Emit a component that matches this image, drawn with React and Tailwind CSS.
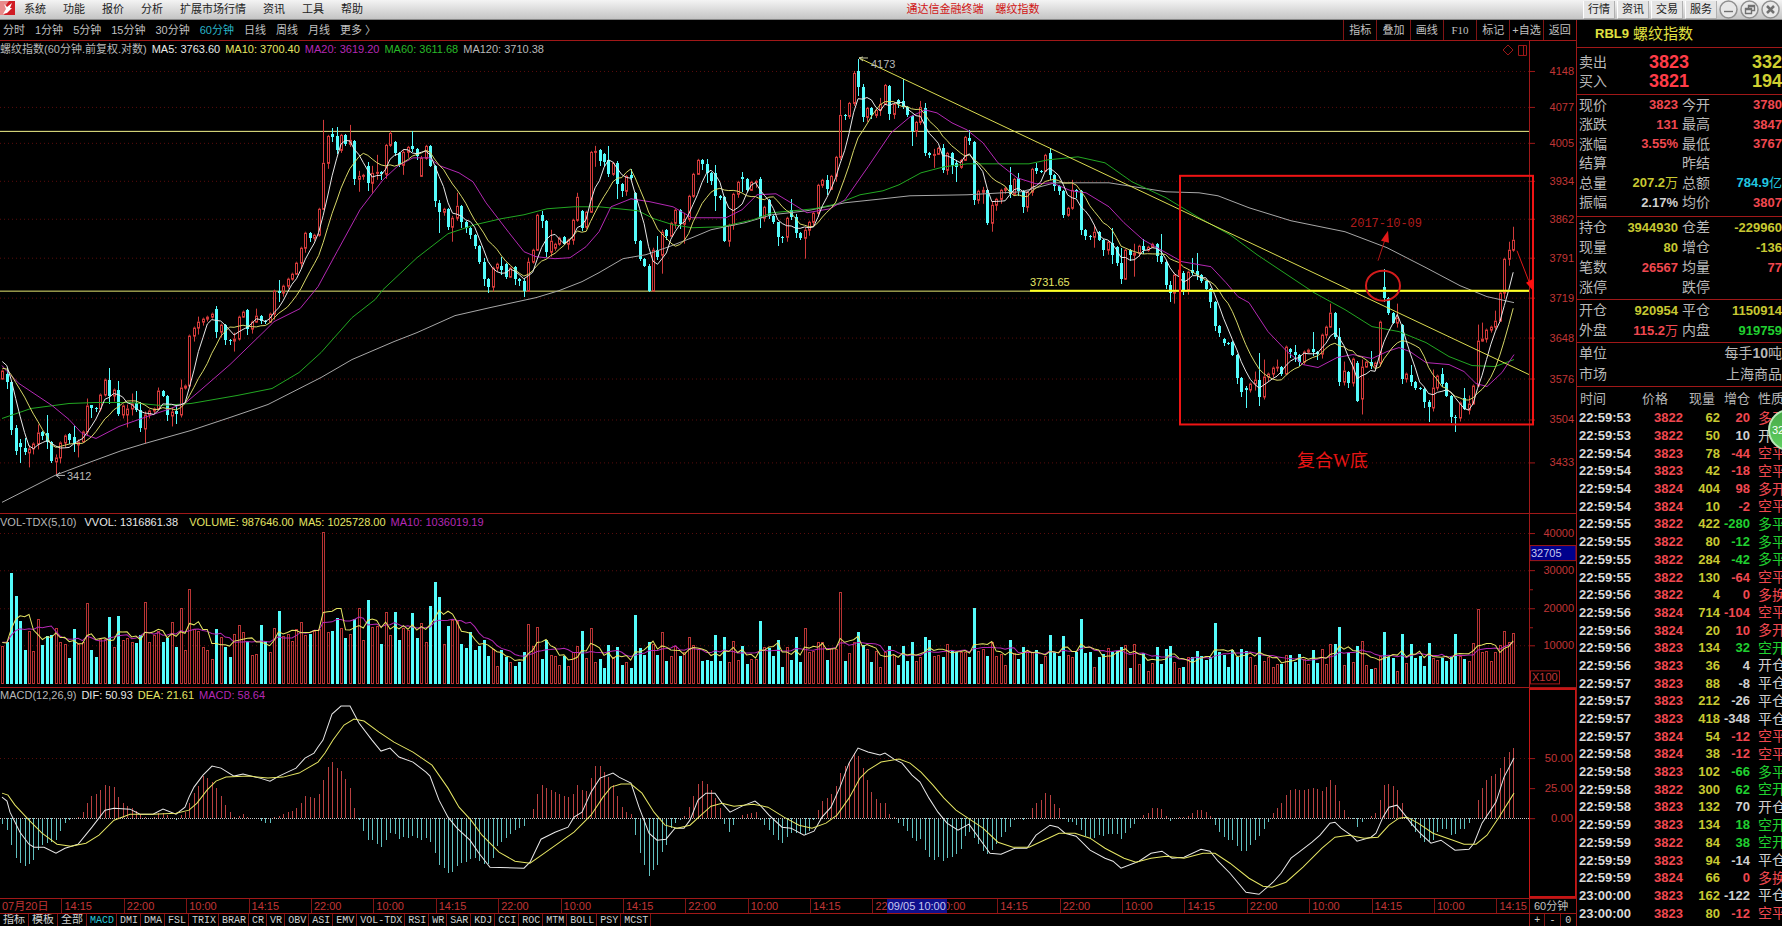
import clsx from "clsx";

const STEP = 4.457;
const X0 = 2.3;
const barX = (i) => Math.round(X0 + i * STEP);

const RED = "#d23a3a";
const CYAN = "#54fcfc";
const WHITE = "#e8e8e8";
const YELLOW = "#e6e664";
const MAGENTA = "#b428b4";
const GREEN = "#22a822";
const GRAY = "#a8a8a8";
const LINE = "#a01818";

// close level of every bar, in chart units
const closes = [
  371, 382, 431, 452, 448, 453, 449, 444, 433, 437, 443, 462, 458, 443, 436, 441, 445, 442, 432, 406,
  409, 409, 395, 380, 396, 390, 415, 406, 409, 404, 411, 429, 415, 411, 409, 391, 396, 416, 412, 415,
  388, 386, 336, 328, 322, 319, 317, 314, 332, 325, 340, 341, 339, 317, 312, 329, 322, 316, 321, 322,
  314, 291, 293, 286, 279, 274, 263, 248, 233, 238, 235, 209, 163, 136, 137, 150, 135, 144, 140, 179,
  176, 175, 183, 173, 172, 174, 145, 133, 153, 165, 152, 147, 149, 156, 158, 146, 166, 201, 212, 209,
  227, 218, 206, 222, 228, 235, 246, 262, 279, 287, 268, 264, 270, 277, 268, 279, 281, 291, 262, 250,
  215, 221, 252, 241, 244, 238, 244, 240, 220, 197, 228, 212, 152, 151, 161, 162, 174, 163, 184, 191,
  176, 178, 241, 259, 266, 291, 250, 257, 232, 236, 223, 210, 224, 219, 196, 174, 160, 164, 173, 181,
  196, 198, 241, 225, 194, 182, 179, 190, 182, 181, 218, 207, 216, 222, 237, 237, 218, 217, 233, 238,
  230, 222, 213, 185, 180, 189, 176, 157, 115, 116, 103, 73, 87, 117, 108, 115, 110, 104, 85, 114,
  104, 104, 107, 115, 131, 122, 107, 153, 155, 154, 148, 170, 153, 165, 167, 160, 137, 141, 200, 191,
  190, 223, 205, 199, 190, 188, 194, 179, 191, 207, 192, 169, 171, 171, 155, 175, 186, 191, 215, 208,
  190, 192, 230, 236, 237, 232, 240, 250, 242, 255, 263, 279, 250, 255, 253, 246, 250, 247, 244, 256,
  262, 285, 293, 275, 270, 290, 272, 273, 275, 281, 289, 302, 326, 333, 343, 343, 355, 378, 392, 390,
  384, 380, 397, 377, 374, 368, 367, 374, 347, 352, 355, 362, 352, 350, 352, 354, 335, 327, 313, 337,
  382, 371, 383, 359, 401, 367, 362, 366, 363, 322, 298, 313, 323, 318, 379, 374, 382, 388, 389, 403,
  408, 388, 376, 384, 396, 418, 418, 403, 410, 404, 386, 341, 339, 330, 327, 321, 293, 259, 250, 240,
];

// bars that open away from the previous close
const gapOpens = {
  0: 379, 1: 374, 3: 429, 4: 444, 5: 449, 9: 433, 10: 434, 15: 435, 16: 438, 20: 406, 24: 380, 28: 415,
  48: 309, 55: 310, 62: 291, 69: 233, 74: 134, 75: 136, 79: 141, 82: 166, 85: 172, 88: 142, 92: 146, 94: 176,
  98: 203, 112: 266, 113: 264, 115: 267, 124: 248, 126: 237, 130: 211, 131: 227, 134: 150, 135: 154, 136: 160,
  141: 175, 142: 193, 147: 250, 148: 255, 149: 230, 157: 160, 160: 173, 162: 197, 166: 177, 170: 179, 172: 200,
  177: 210, 192: 71, 193: 87, 199: 86, 201: 100, 202: 101, 204: 116, 207: 108, 214: 163, 217: 138, 218: 142,
  220: 192, 226: 185, 228: 178, 232: 168, 235: 153, 242: 191, 246: 232, 249: 243, 250: 247, 265: 273,
  267: 270, 268: 271, 274: 339, 276: 342, 279: 388, 282: 380, 287: 367, 289: 349, 294: 349, 302: 372, 304: 363,
  305: 399, 310: 287, 314: 325, 316: 375, 323: 374, 324: 383, 325: 396, 328: 398,
};
const openOf = (i) => gapOpens[i] ?? closes[i - 1];
const isUp = (i) => closes[i] < openOf(i);

// bars whose wick reaches well beyond the body: [high, low]
const wicks = {
  1: [368, 389], 3: [426, 456], 4: [440, 464], 5: [439, 456], 6: [446, 468], 8: [425, 450], 10: [416, 450],
  12: [455, 475], 16: [427, 453], 17: [440, 458], 19: [399, 436], 20: [406, 419], 24: [368, 405], 26: [381, 417],
  28: [405, 428], 29: [394, 416], 30: [391, 413], 31: [403, 433], 32: [412, 444], 35: [388, 411], 38: [408, 427],
  39: [406, 425], 40: [380, 418], 44: [317, 335], 48: [306, 338], 52: [333, 352], 57: [309, 323], 62: [280, 302],
  72: [120, 210], 74: [128, 142], 75: [127, 154], 78: [125, 147], 80: [171, 192], 82: [162, 191], 83: [166, 193],
  84: [155, 180], 87: [131, 147], 90: [150, 175], 92: [131, 152], 94: [156, 177], 98: [200, 233], 101: [216, 242],
  102: [193, 221], 108: [258, 286], 112: [257, 275], 117: [279, 297], 118: [258, 292], 121: [211, 228],
  123: [230, 257], 129: [193, 222], 133: [146, 167], 136: [146, 177], 138: [161, 199], 141: [169, 180],
  145: [264, 292], 146: [248, 291], 147: [236, 260], 148: [230, 274], 149: [229, 240], 153: [213, 244],
  158: [159, 183], 160: [165, 211], 166: [172, 192], 170: [177, 228], 174: [222, 246], 177: [199, 220],
  178: [214, 238], 180: [228, 259], 185: [175, 195], 188: [100, 160], 191: [71, 106], 192: [59, 96],
  193: [84, 122], 197: [98, 116], 202: [79, 109], 204: [115, 146], 206: [101, 125], 207: [103, 156],
  209: [149, 168], 211: [144, 173], 213: [152, 174], 214: [160, 182], 217: [130, 145], 220: [187, 204],
  222: [202, 232], 226: [167, 198], 228: [173, 196], 232: [163, 174], 235: [148, 180], 240: [180, 210],
  245: [225, 248], 249: [228, 264], 251: [248, 284], 254: [244, 277], 256: [239, 254], 260: [234, 264],
  262: [281, 302], 263: [273, 304], 265: [271, 295], 267: [258, 275], 268: [253, 280], 279: [386, 409],
  281: [372, 391], 282: [353, 407], 283: [360, 400], 286: [360, 372], 290: [345, 362], 294: [332, 356],
  298: [304, 328], 300: [328, 386], 301: [362, 386], 304: [361, 403], 305: [360, 415], 307: [351, 369],
  310: [269, 302], 313: [304, 328], 316: [365, 386], 320: [400, 423], 321: [370, 412], 323: [368, 387],
  326: [416, 433], 328: [388, 411], 329: [396, 415], 331: [325, 387], 332: [323, 342], 335: [311, 330],
  338: [242, 266], 339: [227, 252],
};

const volumes = [
  38, 42, 111, 88, 63, 34, 53, 33, 65, 39, 48, 49, 56, 42, 40, 26, 55, 40, 42, 81,
  34, 27, 45, 45, 67, 37, 68, 44, 46, 42, 41, 49, 82, 42, 49, 53, 42, 46, 62, 37,
  76, 34, 95, 55, 53, 37, 34, 25, 55, 47, 37, 27, 50, 59, 52, 42, 29, 30, 59, 43,
  32, 56, 73, 48, 50, 43, 55, 62, 49, 50, 53, 55, 152, 52, 53, 66, 56, 46, 50, 65,
  76, 44, 84, 57, 58, 40, 72, 49, 72, 44, 56, 54, 71, 46, 61, 42, 78, 102, 87, 40,
  58, 64, 63, 40, 36, 52, 34, 38, 44, 28, 35, 18, 34, 27, 22, 18, 22, 32, 60, 38,
  57, 25, 44, 29, 28, 19, 28, 18, 32, 38, 53, 26, 56, 22, 25, 16, 39, 27, 37, 19,
  22, 16, 69, 36, 29, 42, 40, 29, 52, 23, 28, 38, 28, 32, 47, 39, 35, 23, 24, 23,
  49, 23, 47, 22, 43, 24, 38, 20, 25, 25, 63, 37, 36, 28, 44, 17, 37, 24, 47, 22,
  56, 32, 33, 42, 42, 24, 36, 35, 92, 23, 31, 42, 52, 39, 35, 22, 33, 17, 32, 38,
  29, 19, 38, 23, 42, 23, 27, 47, 44, 28, 29, 27, 40, 33, 32, 32, 32, 27, 76, 33,
  35, 28, 42, 28, 30, 19, 44, 31, 25, 37, 33, 32, 34, 20, 28, 49, 32, 28, 48, 29,
  27, 32, 65, 31, 32, 17, 27, 30, 36, 32, 33, 37, 39, 16, 40, 20, 31, 13, 21, 37,
  20, 35, 38, 22, 16, 17, 27, 27, 33, 28, 24, 27, 61, 32, 29, 17, 34, 27, 35, 33,
  27, 19, 47, 23, 27, 17, 20, 20, 29, 29, 22, 30, 25, 20, 34, 21, 35, 20, 40, 40,
  57, 19, 31, 22, 38, 43, 19, 15, 16, 28, 52, 27, 26, 13, 50, 21, 40, 26, 28, 18,
  41, 26, 24, 26, 23, 27, 50, 28, 25, 23, 41, 75, 32, 33, 23, 32, 39, 53, 42, 51,
];

const histogram = [
  -6, -12, -27, -40, -45, -48, -46, -42, -32, -27, -25, -24, -22, -13, -5, -2, 0, 1, 6, 15,
  22, 24, 28, 33, 32, 31, 21, 15, 12, 10, 7, 4, 1, 0, 1, 5, 5, 3, 0, -2,
  3, 6, 15, 25, 32, 42, 40, 36, 30, 22, 13, 6, 1, 2, 4, 1, 0, -1, -3, -5,
  -5, 1, 2, 4, 6, 7, 10, 15, 22, 21, 20, 24, 38, 51, 56, 50, 47, 39, 30, 10,
  -2, -13, -22, -22, -26, -29, -22, -15, -16, -21, -19, -20, -18, -20, -22, -20, -24, -35, -47, -50,
  -55, -54, -48, -45, -44, -41, -40, -43, -46, -46, -40, -28, -24, -20, -16, -12, -10, -8, 0, 9,
  24, 33, 30, 28, 26, 24, 22, 21, 24, 33, 28, 27, 40, 52, 52, 46, 41, 33, 22, 11,
  6, 4, -17, -35, -47, -58, -52, -47, -34, -27, -10, -5, -2, 2, 11, 22, 34, 37, 34, 28,
  20, 10, -6, -14, -7, 0, 3, 4, 5, 6, -2, -7, -12, -17, -22, -25, -19, -15, -15, -16,
  -17, -13, -2, 8, 17, 20, 24, 32, 45, 52, 56, 65, 62, 50, 38, 26, 19, 15, 15, 4,
  1, -5, -8, -13, -20, -23, -21, -32, -39, -42, -39, -43, -40, -39, -36, -31, -18, -14, -20, -26,
  -33, -36, -32, -26, -19, -14, -9, -2, -1, -2, 0, 10, 15, 18, 25, 23, 14, 10, -1, -4,
  -4, -7, -12, -18, -20, -20, -17, -18, -16, -16, -16, -21, -15, -10, -6, 0, 3, 5, 10, 10,
  9, 2, -3, -1, 1, 1, 2, 5, 8, 8, 6, 2, -7, -14, -19, -22, -22, -28, -33, -33,
  -27, -22, -18, -11, -4, 5, 10, 15, 23, 28, 29, 28, 28, 29, 30, 29, 27, 31, 38, 33,
  17, 8, 1, -1, -9, -4, 0, 2, 5, 18, 33, 34, 32, 28, 15, 1, -8, -14, -20, -24,
  -23, -22, -14, -11, -11, -17, -16, -11, -11, -5, 0, 18, 30, 38, 42, 44, 50, 61, 66, 70,
];

const ma20 =
  "2,366 7,372 19,384 52,406 69,420 82,434 96,439 119,427 153,415 168,410 186,403 199,392 230,365 264,332 274,322 300,309 318,287 337,252 360,210 383,180 398,166 413,158 429,158 440,166 459,173 473,182 486,203 509,233 524,252 536,257 555,259 570,258 586,247 599,232 611,207 631,199 650,202 673,207 692,218 726,218 742,210 757,195 776,194 791,203 807,213 830,209 845,200 868,167 891,133 910,117 925,110 937,113 952,123 967,130 983,143 998,163 1017,178 1036,184 1052,183 1071,191 1086,193 1109,207 1124,223 1143,240 1166,253 1182,262 1211,267 1226,283 1238,297 1249,303 1268,332 1287,352 1303,365 1318,368 1337,358 1353,355 1372,359 1387,352 1399,348 1410,352 1426,363 1449,365 1464,372 1476,384 1487,387 1502,373 1514,355";
const ma60 =
  "2,419 31,409 69,404 96,403 130,403 161,406 191,404 237,396 272,389 299,373 321,353 352,318 375,300 383,290 417,258 448,234 475,225 501,219 524,215 547,209 574,207 599,207 638,211 654,219 673,225 692,228 722,227 753,220 772,213 814,209 837,204 860,195 883,191 899,185 921,173 944,167 967,164 1029,164 1048,160 1078,157 1105,163 1132,182 1166,198 1199,218 1230,235 1257,255 1284,273 1314,293 1345,310 1372,327 1399,332 1426,343 1449,357 1472,366 1495,367 1514,360";
const ma120 =
  "2,503 55,476 92,462 122,451 145,444 191,431 230,418 268,405 321,378 352,360 394,342 417,333 455,316 490,308 513,303 536,298 559,291 582,282 599,273 623,259 646,255 669,247 692,238 711,230 745,223 772,215 807,211 845,203 883,199 910,196 967,195 1021,192 1055,183 1109,183 1166,192 1199,193 1218,196 1249,208 1291,221 1345,232 1387,248 1426,268 1460,286 1487,297 1514,303";
const dif =
  "2,797 7,801 10,812 20,832 29,844 34,847 44,847 56,853 65,848 78,844 92,827 105,810 114,808 130,809 140,814 153,814 163,809 176,814 185,807 189,797 194,787 203,775 212,766 221,768 234,776 243,774 260,778 270,781 279,776 296,768 305,758 314,753 318,747 323,740 332,714 341,706 350,706 359,723 372,740 381,751 390,748 399,757 413,762 426,772 430,776 439,800 448,817 457,828 470,840 479,853 490,867 524,868 530,862 541,839 555,832 568,827 574,817 582,812 591,792 600,778 613,773 619,777 631,783 639,807 649,833 657,840 666,839 675,828 684,828 690,820 698,800 706,793 715,793 722,803 730,812 742,806 755,801 760,805 769,815 782,827 791,828 804,835 814,831 822,817 831,807 840,787 849,763 858,748 868,752 880,755 885,753 894,759 902,763 912,775 920,782 929,798 938,812 947,823 958,830 969,824 977,835 990,853 1001,854 1015,848 1027,848 1036,835 1050,825 1058,827 1065,833 1076,836 1090,850 1105,858 1113,861 1121,868 1139,861 1151,853 1162,851 1172,858 1184,857 1201,849 1210,851 1218,861 1230,873 1246,892 1259,894 1273,882 1281,873 1291,858 1299,852 1312,842 1320,835 1330,823 1335,822 1341,828 1351,835 1357,841 1371,837 1376,833 1383,817 1389,807 1397,805 1405,815 1411,823 1420,833 1431,843 1441,840 1455,850 1469,849 1474,843 1482,823 1496,802 1504,777 1514,758";
const dea =
  "2,793 8,795 15,805 29,820 42,833 57,844 71,846 86,843 99,835 114,820 130,814 153,814 176,813 189,810 197,803 207,790 216,781 226,777 249,776 268,778 283,777 299,773 318,762 325,753 333,740 344,725 354,719 364,721 379,732 394,742 413,752 432,765 448,788 459,807 471,820 482,835 499,852 515,861 530,863 543,854 574,832 591,815 603,797 611,787 621,784 631,784 642,793 654,812 665,825 677,828 690,825 701,815 711,806 722,803 734,806 753,804 768,807 784,817 799,825 812,828 826,823 837,815 849,798 860,778 868,770 881,762 899,759 910,763 921,772 933,785 944,798 956,810 971,820 983,828 998,842 1013,847 1029,847 1044,840 1059,833 1075,833 1090,838 1105,848 1124,858 1136,862 1151,858 1166,856 1184,858 1203,853 1215,853 1230,863 1249,878 1263,886 1272,887 1286,882 1303,867 1322,848 1335,837 1349,835 1364,838 1378,837 1389,825 1399,818 1407,817 1418,823 1433,833 1453,840 1464,844 1476,844 1487,835 1499,817 1514,793";

const priceTicks = [
  [71, "4148"], [107, "4077"], [143, "4005"], [181, "3934"], [219, "3862"], [258, "3791"],
  [298, "3719"], [338, "3648"], [379, "3576"], [420, "3504"], [463, "3433"],
];
const volumeTicks = [[534, "40000"], [571, "30000"], [609, "20000"], [646, "10000"]];
const macdTicks = [[758, "50.00"], [788, "25.00"], [818, "0.00"]];

const closeHistory = [374, 374, 375, 376, 378, 362, 360, 358, 359];
const volumeHistory = [42, 42, 40, 45, 42, 44, 42, 40, 45];

// moving average as polyline points
function average(values, history, size, map = (v) => v) {
  const all = [...history, ...values];
  return values
    .map((_, i) => {
      const end = i + history.length + 1;
      const mean = all.slice(end - size, end).reduce((a, b) => a + b, 0) / size;
      return `${(X0 + i * STEP).toFixed(1)},${map(mean).toFixed(1)}`;
    })
    .join(" ");
}

function Curve({ points, color }) {
  return <polyline points={points} fill="none" stroke={color} />;
}

function GridLines({ ys }) {
  return ys.map((y) => (
    <line key={y} x1="0" x2="1529" y1={y + 0.5} y2={y + 0.5} stroke="#5a0c0c" strokeDasharray="1 3" />
  ));
}

function Candles() {
  return (
    <g shapeRendering="crispEdges">
      {closes.map((close, i) => {
        const open = openOf(i);
        const top = Math.min(open, close);
        const bottom = Math.max(open, close);
        const [high, low] = wicks[i] || [top - ((i * 7) % 7) - 1, bottom + ((i * 5) % 6) + 1];
        const x = barX(i);
        const h = Math.max(bottom - top, 1);
        return isUp(i) ? (
          <g key={i} stroke={RED} fill="none">
            <line x1={x + 0.5} x2={x + 0.5} y1={Math.min(high, top)} y2={top} />
            <line x1={x + 0.5} x2={x + 0.5} y1={bottom} y2={Math.max(low, bottom)} />
            <rect x={x - 0.5} y={top + 0.5} width="2" height={h} />
          </g>
        ) : (
          <g key={i} fill={CYAN}>
            <rect x={x} y={high} width="1" height={Math.max(low - high, 1)} />
            <rect x={x - 1} y={top} width="3" height={h} />
          </g>
        );
      })}
    </g>
  );
}

function PriceChart() {
  return (
    <svg viewBox="0 41 1529 473" preserveAspectRatio="none" className="block h-full w-full overflow-visible">
      <GridLines ys={priceTicks.map((t) => t[0])} />
      <path d="M0 131.5H1529" stroke="#f4f48c" />
      <path d="M0 291.5H1529" stroke="#e6e670" />
      <Candles />
      <Curve points={ma120} color={GRAY} />
      <Curve points={ma60} color={GREEN} />
      <Curve points={ma20} color={MAGENTA} />
      <Curve points={average(closes, closeHistory, 10)} color="#d8d868" />
      <Curve points={average(closes, closeHistory, 5)} color={WHITE} />
      <path d="M859 58L1529 375" stroke="#dcdc50" />
      <path d="M1030 291H1529" stroke="#ffff20" strokeWidth="2" />
      <g fontSize="11">
        <text x="1030" y="286" fill={YELLOW}>3731.65</text>
        <path d="M859 58h9M859 58l4 3M859 58l4 -1" stroke="#c8c8a0" fill="none" />
        <text x="871" y="68" fill="#b8b8b8">4173</text>
        <path d="M56 476h9M60 473l-4 3l4 3" stroke="#b8b8b8" fill="none" />
        <text x="67" y="481" fill="#b8b8b8">3412</text>
      </g>
      <rect x="1180" y="176" width="353" height="249" fill="none" stroke="#f01414" strokeWidth="2" />
      <ellipse cx="1383" cy="286" rx="17" ry="15" fill="none" stroke="#d41c1c" strokeWidth="2" />
      <path d="M1378 261L1385 240" stroke="#b81818" />
      <path d="M1388 231L1389 243L1381 241Z" fill="#e01818" />
      <path d="M1517 251L1529 282" stroke="#e01818" />
      <path d="M1533 291L1526 283L1533 279Z" fill="#ff1010" />
      <text x="1350" y="227" fontSize="12" fill="#b01c1c" className="font-['Liberation_Mono',monospace]">
        2017-10-09
      </text>
      <text x="1297" y="468" fontSize="18" fill="#e81414" className="font-['Liberation_Serif','Noto_Sans_CJK_SC',serif]">
        复合W底
      </text>
      <path d="M1508 45l5 5l-5 5l-5 -5zM1518.5 45.5h8v10h-8zM1523.5 45.5v10" fill="none" stroke={LINE} />
    </svg>
  );
}

function VolumeChart() {
  const map = (v) => 685 - v;
  return (
    <svg viewBox="0 515 1529 172" preserveAspectRatio="none" className="block h-full w-full">
      <GridLines ys={volumeTicks.map((t) => t[0])} />
      <g shapeRendering="crispEdges">
        {volumes.map((v, i) =>
          isUp(i) ? (
            <rect key={i} x={barX(i) - 0.5} y={685.5 - v} width="2" height={v - 1} fill="none" stroke="#b83434" />
          ) : (
            <rect key={i} x={barX(i) - 1} y={685 - v} width="3" height={v} fill={CYAN} />
          )
        )}
      </g>
      <Curve points={average(volumes, volumeHistory, 10, map)} color={MAGENTA} />
      <Curve points={average(volumes, volumeHistory, 5, map)} color={YELLOW} />
    </svg>
  );
}

function MacdChart() {
  return (
    <svg viewBox="0 688 1529 210" preserveAspectRatio="none" className="block h-full w-full">
      <GridLines ys={[758]} />
      <g shapeRendering="crispEdges">
        {histogram.map((v, i) => (
          <rect
            key={i}
            x={barX(i)}
            y={v > 0 ? 818 - v : 818}
            width="1"
            height={Math.abs(v)}
            fill={v > 0 ? "#b84040" : "#60c0c0"}
          />
        ))}
        <path d="M0 818.5H1529" stroke="#c8c8c8" strokeDasharray="1 1" />
      </g>
      <Curve points={dif} color={WHITE} />
      <Curve points={dea} color={YELLOW} />
    </svg>
  );
}

function Axis({ viewBox, ticks, labelX = 44, children }) {
  return (
    <svg viewBox={viewBox} preserveAspectRatio="none" className="block h-full w-full">
      {ticks.map(([y, label]) => (
        <g key={label}>
          <path d={`M0 ${y + 0.5}h5`} stroke={LINE} />
          <text x={labelX} y={y + 4} textAnchor="end" fontSize="11" fill="#c03636">
            {label}
          </text>
        </g>
      ))}
      {children}
    </svg>
  );
}

function Legend({ items }) {
  return (
    <div className="absolute top-px left-0 flex h-3.5 items-center gap-[5px] text-[11px] leading-none whitespace-pre">
      {items.map(([text, color]) => (
        <span key={text} className={color}>
          {text}
        </span>
      ))}
    </div>
  );
}

function Panel({ className, chart, axis, legend, axisClass }) {
  return (
    <section className={clsx("flex min-h-0 border-b border-[#a01818]", className)}>
      <div className="relative min-w-0 flex-1">
        {chart}
        <Legend items={legend} />
      </div>
      <div className={clsx("w-[47px] shrink-0 border-l", axisClass || "border-[#a01818]")}>{axis}</div>
    </section>
  );
}

const menus = ["系统", "功能", "报价", "分析", "扩展市场行情", "资讯", "工具", "帮助"];
const shortcuts = ["行情", "资讯", "交易", "服务"];
const windowIcons = [
  ["最小化", "M5 11.5h9"],
  ["还原", "M8.5 8v-2.5h6v5h-3M5.5 8.5h6v5h-6zM8 6.5h6.5M5 9.5h6.5"],
  ["关闭", "M6 6l7 7M13 6l-7 7"],
];

function TitleBar() {
  return (
    <header className="flex h-5 shrink-0 items-center border-b border-[#888] bg-gradient-to-b from-[#f4f4f4] to-[#c4c4c4] text-[11px] leading-none text-[#222]">
      <svg viewBox="0 0 16 16" className="mb-1 h-4 w-4">
        <rect x="0" y="1" width="15" height="14" fill="#d01c24" />
        <path d="M0 1h9l-3 4l1 4l-3 6h-4z" fill="#e88a8a" />
        <path d="M3 14l3-5l-2-5l3 3l5-4l-2 5l2 0l-5 5z" fill="#fff" />
      </svg>
      <nav className="ml-2 flex gap-[17px]">
        {menus.map((m) => (
          <button key={m}>{m}</button>
        ))}
      </nav>
      <h1 className="flex flex-1 justify-center gap-3 text-[#d01414]">
        <span>通达信金融终端</span>
        <span>螺纹指数</span>
      </h1>
      <div className="flex gap-0.5">
        {shortcuts.map((s) => (
          <button key={s} className="h-[18px] w-8 border border-t-0 border-[#b0b0b0] border-l-white bg-[#e4e4e4]">
            {s}
          </button>
        ))}
      </div>
      <div className="mx-0.5 flex gap-0.5">
        {windowIcons.map(([label, d]) => (
          <button key={label} aria-label={label}>
            <svg viewBox="0 0 19 19" className="h-[19px] w-[19px]" fill="none" stroke="#707070">
              <circle cx="9.5" cy="9.5" r="8.5" fill="#e8e8e8" stroke="#909090" strokeWidth="1.5" />
              <path d={d} strokeWidth={label === "关闭" ? 2.5 : 1.4} />
            </svg>
          </button>
        ))}
      </div>
    </header>
  );
}

const periods = ["分时", "1分钟", "5分钟", "15分钟", "30分钟", "60分钟", "日线", "周线", "月线", "更多 〉"];
const tools = ["指标", "叠加", "画线", "F10", "标记", "+自选", "返回"];

function Toolbar() {
  return (
    <div className="flex h-[21px] shrink-0 items-stretch justify-between border-b border-[#a01818] text-[11px] leading-none text-[#c0c0c0]">
      <div className="flex items-center gap-2.5 pl-[3px]">
        {periods.map((p) => (
          <button key={p} className={p === "60分钟" ? "text-[#28b4c8]" : ""}>
            {p}
          </button>
        ))}
      </div>
      <div className="grid w-[233px] grid-cols-7">
        {tools.map((t) => (
          <button
            key={t}
            className={clsx("border-l border-[#801414] whitespace-nowrap", t === "F10" && "font-['Liberation_Serif',serif]")}
          >
            {t}
          </button>
        ))}
      </div>
    </div>
  );
}

const times = ["07月20日"];
for (let i = 0; i < 22; i++) times.push(["14:15", "22:00", "10:00"][i % 3]);
times.push("10:00");

function TimeAxis() {
  return (
    <div className="flex h-[15px] shrink-0 border-b border-[#a01818] text-[11px] leading-[15px] text-[#c03636]">
      <div className="relative flex min-w-0 flex-1">
        {times.map((t, i) => (
          <span key={i} className={clsx("min-w-0 flex-[62] pl-0.5", i > 0 && "border-l border-[#801414]")}>
            {t}
          </span>
        ))}
        <span className="min-w-0 flex-[31] border-l border-[#801414] pl-0.5">14:15</span>
        <span className="absolute top-0 left-[58%] h-full w-[60px] bg-[#10108c] text-center whitespace-nowrap text-[#c8c8f0]">
          09/05 10:00
        </span>
      </div>
      <div className="w-[47px] shrink-0 border-l border-[#a01818] pl-1 text-[#c0c0c0]">60分钟</div>
    </div>
  );
}

const indicators =
  "指标 模板 全部 MACD DMI DMA FSL TRIX BRAR CR VR OBV ASI EMV VOL-TDX RSI WR SAR KDJ CCI ROC MTM BOLL PSY MCST".split(" ");

function IndicatorTabs() {
  return (
    <div className="flex h-3 shrink-0 justify-between overflow-hidden font-['Liberation_Mono','Noto_Sans_CJK_SC',monospace] text-[10px] leading-[13px] text-[#d0d0d0]">
      <div className="flex">
        {indicators.map((t, i) => (
          <button
            key={t}
            className={clsx(
              "border-r border-[#801414] pl-[3px]",
              i < 3 ? "pr-[3px] text-[11px]" : "pr-0.5",
              t === "MACD" && "text-[#28c8d8]"
            )}
          >
            {t}
          </button>
        ))}
      </div>
      <div className="grid w-[47px] grid-cols-3 border-l border-[#a01818]">
        {["+", "-", "0"].map((t) => (
          <button key={t} className="border-r border-[#801414] last:border-r-0">
            {t}
          </button>
        ))}
      </div>
    </div>
  );
}

const R = "text-[#f04850]";
const Y = "text-[#c8c832]";
const G = "text-[#20d030]";
const W = "text-[#d0d0d0]";
const C = "text-[#20c8e0]";

const quoteGroups = [
  {
    size: "h-[122px] pb-1",
    rows: [
      ["现价", "3823", R, "今开", "3780", R],
      ["涨跌", "131", R, "最高", "3847", R],
      ["涨幅", "3.55%", R, "最低", "3767", R],
      ["结算", "", R, "昨结", "", R],
      ["总量", "207.2万", Y, "总额", "784.9亿", C],
      ["振幅", "2.17%", W, "均价", "3807", R],
    ],
  },
  {
    size: "h-[83px] pb-0.5",
    rows: [
      ["持仓", "3944930", Y, "仓差", "-229960", Y],
      ["现量", "80", Y, "增仓", "-136", Y],
      ["笔数", "26567", R, "均量", "77", R],
      ["涨停", "", R, "跌停", "", R],
    ],
  },
  {
    size: "h-[43px] pb-0.5",
    rows: [
      ["开仓", "920954", Y, "平仓", "1150914", Y],
      ["外盘", "115.2万", R, "内盘", "919759", G],
    ],
  },
];

const trades = [
  ["22:59:53", 3822, 62, 20, "多开", R],
  ["22:59:53", 3822, 50, 10, "开仓", W],
  ["22:59:54", 3823, 78, -44, "空平", R],
  ["22:59:54", 3823, 42, -18, "空平", R],
  ["22:59:54", 3824, 404, 98, "多开", R],
  ["22:59:54", 3824, 10, -2, "空平", R],
  ["22:59:55", 3822, 422, -280, "多平", G],
  ["22:59:55", 3822, 80, -12, "多平", G],
  ["22:59:55", 3822, 284, -42, "多平", G],
  ["22:59:55", 3822, 130, -64, "空平", R],
  ["22:59:56", 3822, 4, 0, "多换", R],
  ["22:59:56", 3824, 714, -104, "空平", R],
  ["22:59:56", 3824, 20, 10, "多开", R],
  ["22:59:56", 3823, 134, 32, "空开", G],
  ["22:59:56", 3823, 36, 4, "开仓", W],
  ["22:59:57", 3823, 88, -8, "平仓", W],
  ["22:59:57", 3823, 212, -26, "平仓", W],
  ["22:59:57", 3823, 418, -348, "平仓", W],
  ["22:59:57", 3824, 54, -12, "空平", R],
  ["22:59:58", 3824, 38, -12, "空平", R],
  ["22:59:58", 3823, 102, -66, "多平", G],
  ["22:59:58", 3822, 300, 62, "空开", G],
  ["22:59:58", 3823, 132, 70, "开仓", W],
  ["22:59:59", 3823, 134, 18, "空开", G],
  ["22:59:59", 3822, 84, 38, "空开", G],
  ["22:59:59", 3823, 94, -14, "平仓", W],
  ["22:59:59", 3824, 66, 0, "多换", R],
  ["23:00:00", 3823, 162, -122, "平仓", W],
  ["23:00:00", 3823, 80, -12, "空平", R],
];

// the unit after a number is set in the regular weight
function Amount({ text }) {
  const unit = /[万亿]$/.test(text) ? text.slice(-1) : "";
  return (
    <>
      {unit ? text.slice(0, -1) : text}
      {unit && <span className="font-normal">{unit}</span>}
    </>
  );
}

function QuoteGroup({ rows, size }) {
  return (
    <dl className={clsx("grid shrink-0 auto-rows-fr border-b border-[#a01818] pl-0.5", size)}>
      {rows.map(([a, av, ac, b, bv, bc]) => (
        <div key={a} className="grid grid-cols-[30px_69px_35px_1fr] items-center text-[14px] leading-none">
          <dt>{a}</dt>
          <dd className={clsx("text-right text-[13px] font-bold", ac)}>
            <Amount text={av} />
          </dd>
          <dt className="pl-1">{b}</dt>
          <dd className={clsx("text-right text-[13px] font-bold", bc)}>
            <Amount text={bv} />
          </dd>
        </div>
      ))}
    </dl>
  );
}

function QuotePanel() {
  return (
    <aside className="relative flex w-[206px] shrink-0 flex-col overflow-hidden border-l border-[#a01818] text-[#b8b8b8]">
      <h2 className="flex h-7 shrink-0 items-center gap-1 border-b border-[#a01818] pl-[18px] text-[15px] leading-none text-[#e0e040]">
        <span className="text-[13px] font-bold">RBL9</span>
        <span>螺纹指数</span>
      </h2>
      <div className="grid h-[47px] shrink-0 auto-rows-fr border-b border-[#a01818] py-1 pl-0.5">
        {[
          ["卖出", "3823", "332"],
          ["买入", "3821", "194"],
        ].map(([label, price, lots]) => (
          <div key={label} className="grid grid-cols-[30px_80px_1fr] items-center text-[14px] leading-none">
            <span>{label}</span>
            <b className="text-right text-[18px] leading-none text-[#ff3c48]">{price}</b>
            <b className="text-right text-[18px] leading-none text-[#d0d030]">{lots}</b>
          </div>
        ))}
      </div>
      {quoteGroups.map((g) => (
        <QuoteGroup key={g.rows[0][0]} {...g} />
      ))}
      <div className="grid h-11 shrink-0 auto-rows-fr border-b border-[#a01818] pb-0.5 pl-0.5 text-[14px] leading-none">
        <p className="flex items-center justify-between">
          <span>单位</span>
          <span>
            每手<b>10</b>吨
          </span>
        </p>
        <p className="flex items-center justify-between">
          <span>市场</span>
          <span>上海商品</span>
        </p>
      </div>
      <table className="mb-1 w-[210px] flex-1 table-fixed text-right text-[13px] leading-none">
        <colgroup>
          <col className="w-[56px]" />
          <col className="w-[50px]" />
          <col className="w-[37px]" />
          <col className="w-[30px]" />
          <col className="w-[37px]" />
        </colgroup>
        <thead>
          <tr className="h-[22px]">
            <th className="pl-[3px] text-left font-normal">时间</th>
            <th className="pr-[15px] font-normal">价格</th>
            <th className="pr-[5px] font-normal">现量</th>
            <th className="font-normal">增仓</th>
            <th className="pl-2 text-left font-normal whitespace-nowrap">性质</th>
          </tr>
        </thead>
        <tbody className="font-bold">
          {trades.map(([time, price, lots, change, kind, color], i) => (
            <tr key={i}>
              <td className="pl-0.5 text-left text-[#d8d8d8]">{time}</td>
              <td className={R}>{price}</td>
              <td className={Y}>{lots}</td>
              <td className={clsx("whitespace-nowrap", color)}>{change}</td>
              <td className={clsx("pl-2 text-left text-[14px] leading-none font-normal whitespace-nowrap", color)}>{kind}</td>
            </tr>
          ))}
        </tbody>
      </table>
      <div className="absolute top-[389px] -right-7 flex h-[42px] w-[42px] items-center rounded-full border-2 border-[#b8e8b8] bg-gradient-to-b from-[#48a848] to-[#60d060] pl-0.5 text-[11px] text-white">
        32
      </div>
    </aside>
  );
}

export default function App() {
  return (
    <div className="flex h-screen flex-col overflow-hidden bg-black font-['Liberation_Sans','Noto_Sans_CJK_SC',sans-serif]">
      <TitleBar />
      <div className="flex min-h-0 flex-1">
        <main className="flex min-w-0 flex-1 flex-col">
          <Toolbar />
          <Panel
            className="flex-[474]"
            chart={<PriceChart />}
            axis={<Axis viewBox="0 41 46 473" ticks={priceTicks} />}
            legend={[
              ["螺纹指数(60分钟.前复权.对数)", "text-[#b8b8b8]"],
              ["MA5: 3763.60", "text-[#e8e8e8]"],
              ["MA10: 3700.40", "text-[#e6e664]"],
              ["MA20: 3619.20", "text-[#b428b4]"],
              ["MA60: 3611.68", "text-[#28b828]"],
              ["MA120: 3710.38", "text-[#b8b8b8]"],
            ]}
          />
          <Panel
            className="flex-[173]"
            chart={<VolumeChart />}
            axis={
              <Axis viewBox="0 515 46 172" ticks={volumeTicks}>
                <path d="M0 552.5h3M0 590.5h3M0 628.5h3" stroke={LINE} />
                <rect x="0" y="546.5" width="46" height="15" fill="#00008c" stroke={LINE} />
                <text x="1" y="558" fontSize="11" fill="#c8c8f0">32705</text>
                <rect x="0.5" y="671.5" width="29" height="13" fill="none" stroke={LINE} />
                <text x="2" y="682" fontSize="11" fill="#c03636">X100</text>
              </Axis>
            }
            legend={[
              ["VOL-TDX(5,10)", "text-[#b8b8b8]"],
              [" VVOL: 1316861.38", "text-[#e8e8e8]"],
              ["  VOLUME: 987646.00", "text-[#e6e664]"],
              ["MA5: 1025728.00", "text-[#e6e664]"],
              ["MA10: 1036019.19", "text-[#b428b4]"],
            ]}
          />
          <Panel
            className="flex-[211]"
            axisClass="border-2 border-r border-[#c81414]"
            chart={<MacdChart />}
            axis={<Axis viewBox="0 690 44 206" ticks={macdTicks} labelX={42} />}
            legend={[
              ["MACD(12,26,9)", "text-[#b8b8b8]"],
              ["DIF: 50.93", "text-[#e8e8e8]"],
              ["DEA: 21.61", "text-[#e6e664]"],
              ["MACD: 58.64", "text-[#b428b4]"],
            ]}
          />
          <TimeAxis />
          <IndicatorTabs />
        </main>
        <QuotePanel />
      </div>
    </div>
  );
}
